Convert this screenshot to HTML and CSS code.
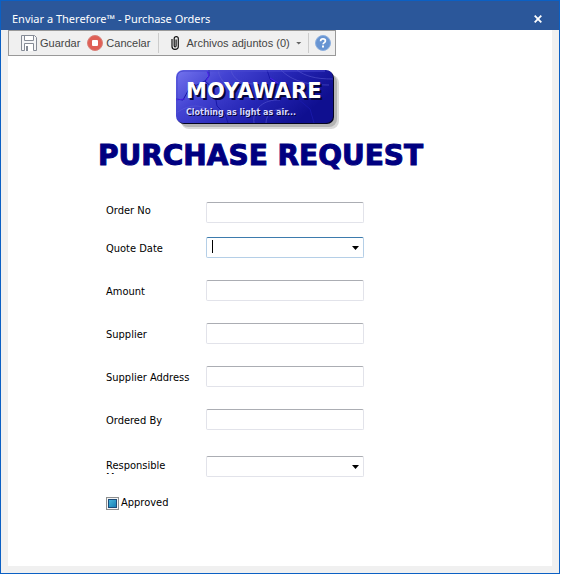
FILE: index.html
```
<!doctype html>
<html lang="es">
<head>
  <meta charset="utf-8">
  <title>Enviar a Therefore™ - Purchase Orders</title>
  <link rel="stylesheet" href="styles.css">
</head>
<body>

  <div class="window">
    <header class="titlebar">
      <span class="title">Enviar a Therefore™ - Purchase Orders</span>
      <button class="close" type="button" aria-label="Cerrar">
        <svg width="8" height="8" viewBox="0 0 8 8"><path d="M.7.7l6.6 6.6M7.3.7L.7 7.3" stroke="#fff" stroke-width="1.8"/></svg>
      </button>
    </header>

    <main class="content">
      <div class="toolbar">
        <button class="tool save" type="button">
          <svg width="16" height="16" viewBox="0 0 16 16">
            <path d="M.5 15.500V.5h13l2 2v13H12.500V8.500h-9v7z" fill="#f4f5f7" stroke="#858b96"/>
            <path d="M3.500 1v4.500h9V1" fill="#fff" stroke="#858b96"/>
            <path d="M4 9h8v7H4z" fill="#fff"/>
            <path d="M5 11h2v5H5z" fill="#858b96"/>
          </svg>
          <span>Guardar</span>
        </button>
        <button class="tool cancel" type="button">
          <svg width="16" height="16" viewBox="0 0 16 16">
            <circle cx="8" cy="8" r="7.500" fill="#df5f56" stroke="#d98079"/>
            <rect x="5" y="5" width="6" height="6" rx="1" fill="#fff"/>
          </svg>
          <span>Cancelar</span>
        </button>
        <span class="separator"></span>
        <button class="tool attach" type="button">
          <svg width="9" height="14" viewBox="0 0 9 14">
            <path d="M1 3v7.500C1 12.300 2.300 13.300 4 13.300s3.300-1 3.300-2.800V2.600C7.300 1.300 6.600.7 5.300.7S3.200 1.300 3.200 2.600v7.200c0 .8.300 1.200.9 1.200s1-.4 1-1.200V3.500" fill="none" stroke="#111" stroke-width="1.200"/>
          </svg>
          <span>Archivos adjuntos (0)</span>
          <i class="arrow small"></i>
        </button>
        <span class="separator"></span>
        <button class="tool help" type="button" aria-label="Ayuda">
          <svg width="16" height="16" viewBox="0 0 16 16">
            <circle cx="8" cy="8" r="7.500" fill="#6794d2" stroke="#8db0df"/>
            <path d="M5.600 6.200c0-1.500 1-2.300 2.400-2.300s2.400.8 2.400 2c0 1.700-2.300 1.700-2.300 3.400" fill="none" stroke="#fff" stroke-width="1.700"/>
            <rect x="7" y="10.500" width="2" height="2" fill="#fff"/>
          </svg>
        </button>
      </div>

      <svg class="logo" width="164" height="60" viewBox="0 0 164 60" role="img" aria-label="Moyaware">
        <defs>
          <linearGradient id="body" x1="0" y1="0" x2="1" y2=".4">
            <stop offset="0" stop-color="#7474ee"/>
            <stop offset=".3" stop-color="#4343d2"/>
            <stop offset=".65" stop-color="#2525b4"/>
            <stop offset="1" stop-color="#0f0f90"/>
          </linearGradient>
          <clipPath id="shape"><rect width="157" height="53" rx="7"/></clipPath>
        </defs>
        <rect x="5" y="5" width="158" height="54" rx="8" fill="#dadada"/>
        <rect x="4" y="4" width="157" height="53" rx="8" fill="#b4b4b4"/>
        <rect x="1" y="1" width="157" height="53" rx="7" fill="#050520"/>
        <rect width="157" height="53" rx="7" fill="url(#body)"/>
        <g clip-path="url(#shape)" fill="none">
          <path d="M0 29l7 1 6-11 16-8 4-5V0M29 11l9 8 3 17 8 8 3 9M91 0l3 9 22 15 18 15 4 14" stroke="#1818a8"/>
          <path d="M31 1l2 5-3 5M0 30l9-1M94 8l8 5" stroke="#4a20e8"/>
          <path d="M42 0c2 12 12 20 26 21M55 0c2 9 10 14 22 14M0 43c15-10 25-8 35-2M78 53c-2-14 10-24 26-23M90 53c0-9 8-15 19-14M105 0c8 8 20 15 48 15M121 0c8 6 18 9 36 9" stroke="#6262d8" stroke-opacity=".5"/>
          <path d="M1 46V8q0-7 7-7h141" stroke="#4848cf"/>
        </g>
        <text class="logo-name" x="10" y="28">MOYAWARE</text>
        <text class="logo-tag" x="10" y="45">Clothing as light as air...</text>
      </svg>

      <h1>PURCHASE REQUEST</h1>

      <form class="fields">
        <div class="row first">
          <label for="order">Order No</label>
          <input id="order" class="box" type="text">
        </div>
        <div class="row">
          <label for="date">Quote Date</label>
          <span class="combo">
            <select id="date" class="box active"><option></option></select>
            <i class="caret"></i>
            <i class="arrow"></i>
          </span>
        </div>
        <div class="row">
          <label for="amount">Amount</label>
          <input id="amount" class="box" type="text">
        </div>
        <div class="row">
          <label for="supplier">Supplier</label>
          <input id="supplier" class="box" type="text">
        </div>
        <div class="row">
          <label for="address">Supplier Address</label>
          <input id="address" class="box" type="text">
        </div>
        <div class="row last">
          <label for="ordered">Ordered By</label>
          <input id="ordered" class="box" type="text">
        </div>
        <div class="row manager">
          <label class="cut" for="manager">Responsible Manager</label>
          <span class="combo">
            <select id="manager" class="box"><option></option></select>
            <i class="arrow"></i>
          </span>
        </div>
        <div class="check">
          <input id="approved" type="checkbox">
          <label for="approved">Approved</label>
        </div>
      </form>
    </main>
  </div>

</body>
</html>
```
FILE: styles.css
```
* {
    box-sizing: border-box;
}
body {
    margin: 0;
    background: #fff;
    color: #000;
    font: 11px/14px "DejaVu Sans Condensed", "DejaVu Sans", sans-serif;
}
button, input, select {
    margin: 0;
    padding: 0;
    font: inherit;
    color: inherit;
}
button {
    border: 0;
    background: none;
}

/* window frame */
.window {
    display: flex;
    flex-direction: column;
    min-height: calc(100vh - 1px);
    margin-right: 1px;
    border: 1px solid #0b60c4;
    background: #f0f0f0;
}
.titlebar {
    display: flex;
    align-items: center;
    justify-content: space-between;
    height: 29px;
    padding: 6px 17px 0 11px;
    background: #2b579a;
    color: #fff;
    font: 11px/16px "Noto Sans", "Open Sans", sans-serif;
}
.close {
    display: flex;
}
.content {
    flex: 1;
    margin: 0 7px 7px;
    background: #fff;
}

/* toolbar */
.toolbar {
    display: flex;
    align-items: center;
    width: max-content;
    height: 26px;
    padding: 0 4px 0 12px;
    border: 1px solid #999;
    background: #f0f0f0;
    color: #444;
    font: 11px/16px "Liberation Sans", sans-serif;
}
.tool {
    display: flex;
    align-items: center;
    gap: 3px;
}
.save {
    margin-right: 7px;
}
.attach {
    gap: 6px;
    margin-left: 6px;
}
.separator {
    width: 1px;
    height: 20px;
    margin: 0 6px;
    background: #ccc;
}
.cancel {
    margin-right: 2px;
}
.arrow {
    width: 7px;
    height: 4px;
    background: #000;
    clip-path: polygon(0 0, 100% 0, 50% 100%);
}
.small {
    width: 6px;
    height: 3px;
    background: #666;
}

.logo {
    display: block;
    margin: 14px 0 0 168px;
}
.logo-name {
    fill: #fff;
    font: bold 21px "DejaVu Sans", sans-serif;
    text-shadow: 2px 2px 0 #06063c;
}
.logo-tag {
    fill: #d8d8ff;
    font: bold 8px "DejaVu Sans", sans-serif;
    text-shadow: 1px 1px 0 #06063c;
}

h1 {
    margin: 9px 0 0 90px;
    color: #000080;
    font: bold 28px/34px "DejaVu Sans", sans-serif;
    -webkit-text-stroke: 1px #000080;
    white-space: nowrap;
}

/* form */
.fields {
    margin: 29px 0 0 98px;
}
.row {
    display: grid;
    grid-template-columns: 100px 158px;
    align-items: center;
    height: 21px;
    margin-bottom: 22px;
}
.row label {
    padding-top: 2px;
}
.row.first {
    align-items: start;
    margin-bottom: 14px;
}
.last {
    margin-bottom: 26px;
}
.manager {
    margin-bottom: 19px;
}
.row .cut {
    width: 70px;
    height: 14px;
    padding: 0;
    line-height: 12px;
    overflow: hidden;
}
.box {
    width: 100%;
    height: 21px;
    padding: 0 6px;
    border: 1px solid #e2e3ea;
    border-top-color: #abadb3;
    border-radius: 2px;
    background: #fff;
    outline: none;
    appearance: none;
}
.active {
    border-color: #b5cfe7;
    border-top-color: #3d7bad;
}
.combo {
    position: relative;
    height: 21px;
}
.combo .arrow {
    position: absolute;
    top: 9px;
    right: 5px;
    pointer-events: none;
}
.caret {
    position: absolute;
    top: 3px;
    left: 6px;
    width: 1px;
    height: 13px;
    background: #000;
}
.check {
    display: flex;
    align-items: center;
    gap: 2px;
}
.check input {
    width: 13px;
    height: 13px;
    border: 1px solid #8e8f8f;
    background: linear-gradient(135deg, #45b5dc, #1880b4) content-box, #1c4a78 padding-box;
    box-shadow: inset 0 0 0 1px #f4f4f4;
    padding: 2px;
    appearance: none;
}
```
